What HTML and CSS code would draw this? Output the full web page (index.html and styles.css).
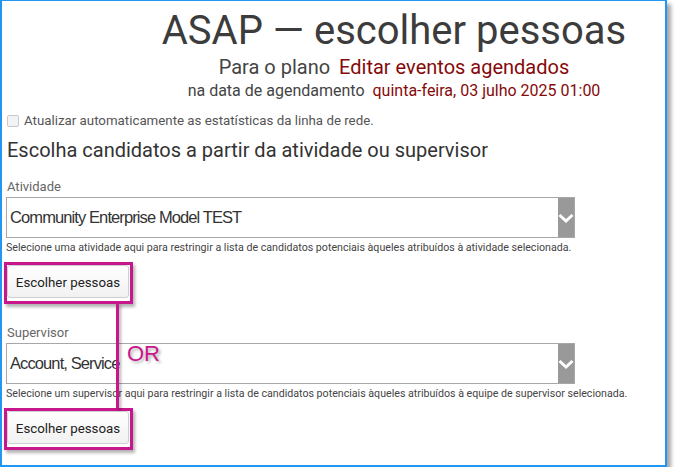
FILE: index.html
```html
<!DOCTYPE html>
<html lang="pt">
<head>
<meta charset="utf-8">
<title>ASAP — escolher pessoas</title>
<link rel="stylesheet" href="styles.css">
</head>
<body>
<div class="frame">
  <header class="head">
    <h1 class="title">ASAP — escolher pessoas</h1>
    <div class="plan"><span>Para o plano</span> <span class="red">Editar eventos agendados</span></div>
    <div class="date"><span>na data de agendamento</span> <span class="red">quinta-feira, 03 julho 2025 01:00</span></div>
  </header>

  <label class="auto"><span class="cb"></span>Atualizar automaticamente as estatísticas da linha de rede.</label>

  <h2 class="section">Escolha candidatos a partir da atividade ou supervisor</h2>

  <div class="field">
    <div class="lbl">Atividade</div>
    <div class="select">
      <span class="val">Community Enterprise Model TEST</span>
      <span class="arrow"><svg width="16" height="39" viewBox="0 0 16 39"><path d="M1.5 17 L8 23 L14.5 17" fill="none" stroke="#fff" stroke-width="3"/></svg></span>
    </div>
    <div class="help">Selecione uma atividade aqui para restringir a lista de candidatos potenciais àqueles atribuídos à atividade selecionada.</div>
    <div class="mark"><button class="btn">Escolher pessoas</button></div>
  </div>

  <div class="field second">
    <div class="lbl">Supervisor</div>
    <div class="select">
      <span class="val">Account, Service</span>
      <span class="arrow"><svg width="16" height="39" viewBox="0 0 16 39"><path d="M1.5 17 L8 23 L14.5 17" fill="none" stroke="#fff" stroke-width="3"/></svg></span>
    </div>
    <div class="help">Selecione um supervisor aqui para restringir a lista de candidatos potenciais àqueles atribuídos à equipe de supervisor selecionada.</div>
    <div class="mark"><button class="btn">Escolher pessoas</button></div>
  </div>

  <div class="connector"></div>
  <div class="or">OR</div>
</div>
</body>
</html>
```

FILE: styles.css
```css
html, body {
  margin: 0;
  padding: 0;
  background: #ffffff;
}

body {
  font-family: Roboto, "Liberation Sans", sans-serif;
  color: #444;
}

.frame {
  position: relative;
  box-sizing: border-box;
  width: 667px;
  height: 467px;
  border: 2px solid #2196f3;
  border-top-width: 1px;
  padding: 0 4px 0 4px;
  background: #fff;
  box-shadow: 4px 4px 4px rgba(0, 0, 0, 0.35);
  overflow: hidden;
}

.head {
  padding-left: 121px;
  padding-top: 6px;
  text-align: center;
  white-space: nowrap;
}

.title {
  margin: 0;
  font-size: 40px;
  line-height: 48px;
  font-weight: 400;
  color: #3c3c3c;
}

.plan {
  font-size: 20px;
  line-height: 24px;
  color: #444;
}

.date {
  margin-top: 2px;
  font-size: 16px;
  line-height: 20px;
  color: #444;
}

.red {
  color: #850a0a;
  margin-left: 4px;
}

.auto {
  display: flex;
  align-items: center;
  margin-top: 11px;
  margin-left: 1px;
  font-size: 13.3px;
  line-height: 18px;
  color: #555;
}

.cb {
  box-sizing: border-box;
  width: 12px;
  height: 12px;
  border: 1px solid #c9c9c9;
  border-radius: 2px;
  background: #f3f3f3;
  margin-right: 5px;
}

.section {
  margin: 8px 0 0 1px;
  font-size: 20px;
  line-height: 24px;
  font-weight: 400;
  color: #333;
}

.field {
  margin-top: 17px;
}

.field.second {
  margin-top: 21px;
}

.lbl {
  margin-left: 1px;
  font-size: 13px;
  line-height: 16px;
  color: #666;
}

.select {
  box-sizing: border-box;
  display: flex;
  align-items: center;
  width: 569px;
  height: 41px;
  margin-top: 2px;
  border: 1px solid #a7a7ab;
  background: #fff;
}

.val {
  flex: 1;
  padding-left: 3px;
  font-family: "Liberation Sans", Arial, sans-serif;
  font-size: 16.5px;
  letter-spacing: -0.9px;
  line-height: 19px;
  color: #333;
}

.arrow {
  display: flex;
  align-self: stretch;
  width: 16px;
  background: #999;
}

.help {
  margin-top: 3px;
  font-size: 10.65px;
  line-height: 14px;
  color: #444;
  white-space: nowrap;
}

.mark {
  display: inline-flex;
  margin: 7px 0 0 -2px;
  padding: 0 1px 3px 0;
  border: 3px solid #c8178c;
  box-shadow: 2px 3px 3px rgba(0, 0, 0, 0.3);
}

.btn {
  box-sizing: border-box;
  width: 122px;
  height: 33px;
  padding: 2px 0 0 0;
  border: 1px solid #cfcfcf;
  border-radius: 3px;
  background: linear-gradient(#ffffff, #f1f1f1);
  font-family: Roboto, "Liberation Sans", sans-serif;
  font-size: 13.3px;
  color: #222;
}

.connector {
  position: absolute;
  left: 114px;
  top: 302px;
  width: 3px;
  height: 105px;
  background: #c8178c;
  box-shadow: 2px 2px 3px rgba(0, 0, 0, 0.3);
}

.or {
  position: absolute;
  left: 125px;
  top: 341px;
  font-family: "Liberation Sans", Arial, sans-serif;
  font-size: 22px;
  line-height: 24px;
  color: #c8178c;
  text-shadow: 2px 2px 3px rgba(0, 0, 0, 0.3);
}
```
